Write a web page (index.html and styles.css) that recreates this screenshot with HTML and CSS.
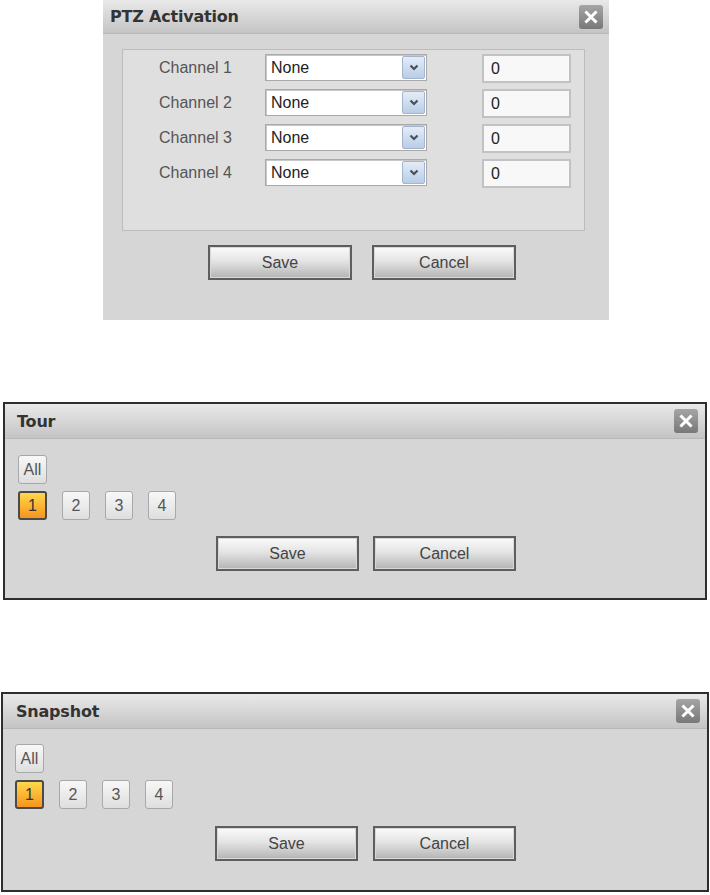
FILE: index.html
```html
<!DOCTYPE html>
<html>
<head>
<meta charset="utf-8">
<link rel="stylesheet" href="styles.css">
</head>
<body>
<div class="page">
  <section class="dlg dlg-ptz">
    <header class="dlg-head">
      <span class="dlg-title">PTZ Activation</span>
      <span class="close"><svg width="14" height="14" viewBox="0 0 14 14"><path d="M2.5 2.5 L11.5 11.5 M11.5 2.5 L2.5 11.5" stroke="#fff" stroke-width="3" stroke-linecap="square"/></svg></span>
    </header>
    <div class="ptz-body">
      <div class="ptz-box">
        <div class="ptz-row">
          <span class="lbl">Channel 1</span>
          <span class="sel"><span class="sel-val">None</span><span class="sel-btn"><svg width="10" height="7" viewBox="0 0 10 7"><path d="M1.5 1.5 L5 5 L8.5 1.5" fill="none" stroke="#4a5058" stroke-width="2.2"/></svg></span></span>
          <span class="num">0</span>
        </div>
        <div class="ptz-row">
          <span class="lbl">Channel 2</span>
          <span class="sel"><span class="sel-val">None</span><span class="sel-btn"><svg width="10" height="7" viewBox="0 0 10 7"><path d="M1.5 1.5 L5 5 L8.5 1.5" fill="none" stroke="#4a5058" stroke-width="2.2"/></svg></span></span>
          <span class="num">0</span>
        </div>
        <div class="ptz-row">
          <span class="lbl">Channel 3</span>
          <span class="sel"><span class="sel-val">None</span><span class="sel-btn"><svg width="10" height="7" viewBox="0 0 10 7"><path d="M1.5 1.5 L5 5 L8.5 1.5" fill="none" stroke="#4a5058" stroke-width="2.2"/></svg></span></span>
          <span class="num">0</span>
        </div>
        <div class="ptz-row">
          <span class="lbl">Channel 4</span>
          <span class="sel"><span class="sel-val">None</span><span class="sel-btn"><svg width="10" height="7" viewBox="0 0 10 7"><path d="M1.5 1.5 L5 5 L8.5 1.5" fill="none" stroke="#4a5058" stroke-width="2.2"/></svg></span></span>
          <span class="num">0</span>
        </div>
      </div>
      <div class="actions actions-ptz">
        <button class="btn">Save</button>
        <button class="btn">Cancel</button>
      </div>
    </div>
  </section>

  <section class="dlg dlg-bordered dlg-tour">
    <header class="dlg-head">
      <span class="dlg-title">Tour</span>
      <span class="close"><svg width="14" height="14" viewBox="0 0 14 14"><path d="M2.5 2.5 L11.5 11.5 M11.5 2.5 L2.5 11.5" stroke="#fff" stroke-width="3" stroke-linecap="square"/></svg></span>
    </header>
    <div class="ch-body">
      <div class="chips"><span class="chip">All</span></div>
      <div class="chips">
        <span class="chip on">1</span><span class="chip">2</span><span class="chip">3</span><span class="chip">4</span>
      </div>
      <div class="actions actions-tour">
        <button class="btn">Save</button>
        <button class="btn">Cancel</button>
      </div>
    </div>
  </section>

  <section class="dlg dlg-bordered dlg-snap">
    <header class="dlg-head">
      <span class="dlg-title">Snapshot</span>
      <span class="close"><svg width="14" height="14" viewBox="0 0 14 14"><path d="M2.5 2.5 L11.5 11.5 M11.5 2.5 L2.5 11.5" stroke="#fff" stroke-width="3" stroke-linecap="square"/></svg></span>
    </header>
    <div class="ch-body">
      <div class="chips"><span class="chip">All</span></div>
      <div class="chips">
        <span class="chip on">1</span><span class="chip">2</span><span class="chip">3</span><span class="chip">4</span>
      </div>
      <div class="actions actions-snap">
        <button class="btn">Save</button>
        <button class="btn">Cancel</button>
      </div>
    </div>
  </section>
</div>
</body>
</html>
```

FILE: styles.css
```css
* { box-sizing: border-box; }
html, body { margin: 0; padding: 0; background: #fff; }
body { font-family: "Liberation Sans", Arial, sans-serif; }

.page { display: flex; flex-direction: column; align-items: flex-start; }

.dlg { background: #d6d6d6; display: flex; flex-direction: column; }

.dlg-ptz { margin-left: 103px; width: 506px; height: 320px; }
.dlg-bordered { border: 2px solid #2e2e2e; }
.dlg-tour { margin-top: 82px; margin-left: 3px; width: 704px; height: 198px; }
.dlg-snap { margin-top: 92px; margin-left: 1px; width: 708px; height: 200px; }

.dlg-head {
  display: flex; align-items: center; justify-content: space-between;
  height: 34px; padding: 0 6px 0 7px;
  background: linear-gradient(#e9e9e9, #c4c4c4);
  border-bottom: 1px solid #b8b8b8;
}
.dlg-bordered .dlg-head { height: 35px; padding: 0 7px 0 12px; }
.dlg-snap .dlg-head { padding-left: 13px; }

.dlg-title {
  font-family: "DejaVu Sans", Verdana, sans-serif;
  font-weight: bold; font-size: 16px; color: #333;
  letter-spacing: -0.2px;
}

.close {
  width: 24px; height: 24px; border-radius: 3px;
  background: linear-gradient(#a5a5a5, #787878);
  display: flex; align-items: center; justify-content: center;
}

/* PTZ */
.ptz-body { padding: 15px 24px 0 19px; }
.ptz-box {
  height: 182px; border: 1px solid #bcbcbc; background: #dfdfdf;
  padding: 4px 0 0 36px;
  display: flex; flex-direction: column;
}
.ptz-row { display: flex; align-items: flex-start; height: 35px; }
.lbl { width: 106px; font-size: 16px; color: #555; line-height: 27px; }
.sel {
  width: 162px; height: 27px; display: flex;
  background: #fff; border: 1px solid #a9a9a9;
  box-shadow: inset 1px 1px 0 #c8c8c8;
}
.sel-val { flex: 1; font-size: 16px; color: #222; line-height: 25px; padding-left: 5px; }
.sel-btn {
  width: 23px; margin: 1px; height: 23px;
  background: linear-gradient(#e4edf8, #b9cde6);
  border: 1px solid #a3b5cc; border-radius: 2px;
  display: flex; align-items: center; justify-content: center;
}
.num {
  margin-left: 55px; width: 89px; height: 29px;
  background: #f8f8f8; border: 2px solid #c2c2c2;
  font-size: 16px; color: #222; line-height: 25px; padding-left: 7px;
}

.actions { display: flex; gap: 20px; }
.actions-ptz { margin-top: 14px; padding-left: 86px; }
.actions-tour { margin-top: 16px; padding-left: 198px; gap: 14px; }
.actions-snap { margin-top: 17px; padding-left: 200px; gap: 15px; }

.btn {
  width: 144px; height: 35px; padding: 0;
  font-family: "Liberation Sans", Arial, sans-serif; font-size: 16px; color: #444;
  border: 2px solid #5e5e5e; border-radius: 0;
  background: linear-gradient(#fbfbfb, #e4e4e4 45%, #b4b4b4);
  box-shadow: inset 0 0 0 1px #d8d8d8;
}
.actions-tour .btn, .actions-snap .btn { width: 143px; }

/* channel chips */
.ch-body { padding: 16px 0 0 13px; display: flex; flex-direction: column; }
.dlg-snap .ch-body { padding-left: 12px; padding-top: 15px; }
.chips { display: flex; gap: 15px; margin-bottom: 7px; }
.chip {
  width: 29px; height: 29px; border: 1px solid #a8a8a8; border-radius: 3px;
  background: linear-gradient(#f8f8f8, #dedede);
  font-size: 16px; color: #555; line-height: 27px; text-align: center;
}
.chips .chip:not(:first-child) { width: 28px; }
.chip.on {
  background: linear-gradient(#ffd84a, #f7941e);
  border: 2px solid #4a4a4a; color: #333; line-height: 25px;
}
.chips + .chips { margin-bottom: 0; }
```
